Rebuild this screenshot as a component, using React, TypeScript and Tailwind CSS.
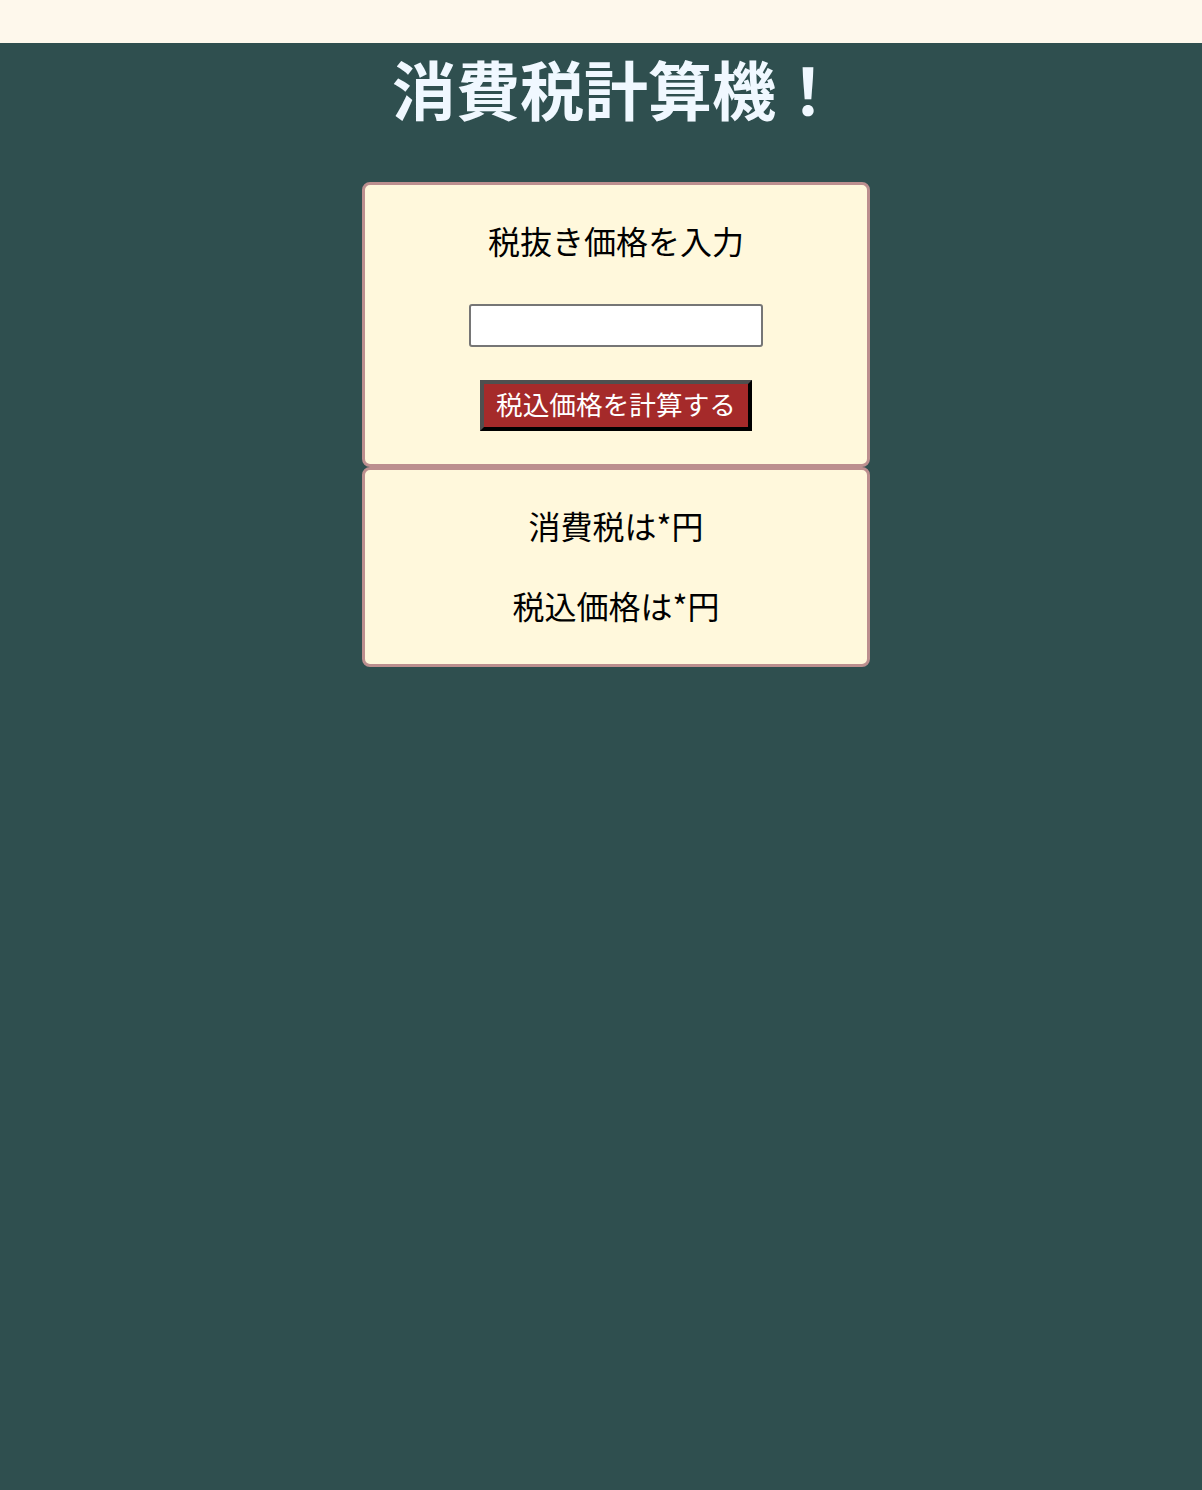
import React from "react";

export default function App() {
  const font = { fontFamily: '"Noto Sans CJK JP", "Noto Sans", sans-serif' };
  return (
    <div className="min-h-[1490px] bg-[#2f4f4f]" style={font}>
      <div className="h-[43px] bg-[#fef8ec]" />
      <div className="pl-[30px]">
        <h1 className="text-center text-[64px] leading-[88px] font-bold text-[#f0f8ff]">
          消費税計算機！
        </h1>
        <div className="mt-[51px] flex flex-col items-center">
          <div className="w-[508px] rounded-[8px] border-[3px] border-[#bc8f8f] bg-[#fff8dc] pt-[35px] pb-[33px] flex flex-col items-center">
            <p className="text-[32px] leading-[40px] text-black">税抜き価格を入力</p>
            <input
              type="text"
              className="mt-[44px] h-[43px] w-[294px] rounded-[3px] border-2 border-[#767676] bg-white"
            />
            <button className="mt-[33px] h-[51px] w-[272px] border-[4px] border-t-[#4f4f4f] border-l-[#4f4f4f] border-b-black border-r-black bg-[#a52a2a] pb-[3px] text-[26.67px] leading-none text-white">
              税込価格を計算する
            </button>
          </div>
          <div className="w-[508px] rounded-[8px] border-[3px] border-[#bc8f8f] bg-[#fff8dc] pt-[35px] pb-[39px] flex flex-col items-center">
            <p className="text-[32px] leading-[40px] text-black">消費税は*円</p>
            <p className="mt-[40px] text-[32px] leading-[40px] text-black">税込価格は*円</p>
          </div>
        </div>
      </div>
    </div>
  );
}
